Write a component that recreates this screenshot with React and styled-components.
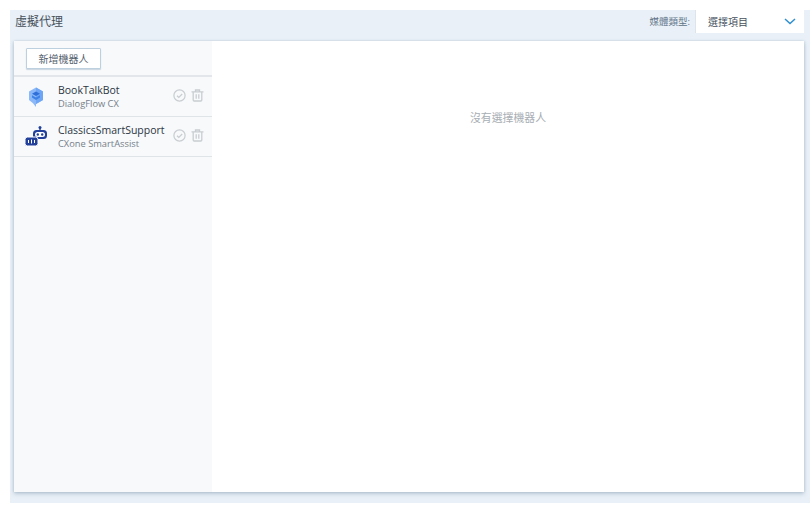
import React from 'react';
import styled, { createGlobalStyle } from 'styled-components';

const Global = createGlobalStyle`
  html, body {
    margin: 0;
    padding: 0;
    background: #fff;
    font-family: "Open Sans", "Noto Sans CJK TC", sans-serif;
  }
`;

const Page = styled.div`
  width: 812px;
  height: 514px;
  box-sizing: border-box;
  padding: 10px 2px 11px 10px;
  overflow: hidden;
`;

const Panel = styled.div`
  height: 100%;
  display: flex;
  flex-direction: column;
  background: #e9f0f7;
`;

const Header = styled.div`
  height: 31px;
  flex: none;
  display: flex;
  align-items: flex-start;
  justify-content: space-between;
  padding: 0 6px 0 5px;
`;

const Title = styled.div`
  font-size: 12px;
  line-height: 24px;
  color: #46505c;
`;

const Filter = styled.div`
  display: flex;
  align-items: flex-start;
`;

const FilterLabel = styled.div`
  font-size: 9.5px;
  line-height: 24px;
  color: #5f7488;
  margin-right: 5px;
`;

const Select = styled.div`
  width: 109px;
  height: 23px;
  box-sizing: border-box;
  background: #fff;
  border-left: 1px solid #dde5ec;
  display: flex;
  align-items: center;
  justify-content: space-between;
  padding: 0 8px 0 12px;
  font-size: 10px;
  color: #46505c;
`;

const Card = styled.div`
  flex: 1;
  margin: 0 6px 11px 4px;
  display: flex;
  min-height: 0;
  background: #fff;
  box-shadow: 0 2px 4px rgba(90, 120, 150, 0.32), 1px 0 2px rgba(90, 120, 150, 0.12), -1px 0 2px rgba(90, 120, 150, 0.12);
`;

const Sidebar = styled.div`
  width: 198px;
  flex: none;
  background: #f7f9fb;
`;

const Toolbar = styled.div`
  height: 36px;
  box-sizing: border-box;
  padding: 7px 0 0 12px;
  border-bottom: 2px solid #e3e7eb;
`;

const AddButton = styled.button`
  display: block;
  width: 75px;
  height: 21px;
  padding: 0;
  background: #fff;
  border: 1px solid #bcd0e0;
  border-radius: 1px;
  box-shadow: 0 1px 1px rgba(120, 150, 180, 0.35);
  font-family: inherit;
  font-size: 10px;
  color: #55626e;
`;

const BotRow = styled.div`
  height: 40px;
  box-sizing: border-box;
  display: flex;
  align-items: center;
  padding: 0 8px 0 10px;
  border-bottom: 1px solid #dfe4e9;
`;

const BotIcon = styled.div`
  width: 24px;
  height: 24px;
  flex: none;
  display: flex;
  align-items: center;
  justify-content: center;
  margin-right: 10px;
`;

const BotInfo = styled.div`
  flex: 1;
  min-width: 0;
`;

const BotName = styled.div`
  font-size: 10.5px;
  font-weight: 500;
  line-height: 14px;
  color: #2c3642;
  white-space: nowrap;
`;

const BotType = styled.div`
  font-size: 9.3px;
  line-height: 13px;
  color: #76808a;
  white-space: nowrap;
`;

const Actions = styled.div`
  display: flex;
  align-items: center;
  gap: 5px;
  flex: none;
  margin-bottom: 2px;
`;

const Content = styled.div`
  flex: 1;
  display: flex;
  justify-content: center;
  padding-top: 69px;
  font-size: 10.9px;
  line-height: 16px;
  color: #a8aeb4;
`;

const Chevron = () => (
  <svg width="12" height="7" viewBox="0 0 12 7" fill="none">
    <path d="M1 1l5 4.500L11 1" stroke="#2f8fd0" strokeWidth="1.5" />
  </svg>
);

const CheckIcon = () => (
  <svg width="13" height="13" viewBox="0 0 13 13" fill="none" stroke="#c9cdd1" strokeWidth="1.2">
    <circle cx="6.500" cy="6.500" r="5.600" />
    <path d="M4 6.700l1.800 1.700L9.200 5" />
  </svg>
);

const TrashIcon = () => (
  <svg width="13" height="13" viewBox="0 0 13 13" fill="none" stroke="#c9cdd1" strokeWidth="1.3">
    <path d="M0.500 2.800h12M4.500 2.600V1h4v1.600M2.200 3v8a1 1 0 0 0 1 1h6.600a1 1 0 0 0 1-1V3M5.200 5.200v4.600M7.800 5.200v4.600" />
  </svg>
);

const DialogFlowIcon = () => (
  <svg width="16" height="20" viewBox="0 0 16 20">
    <path d="M8 .5l7 4v8.600l-7 4V20l-3-3.800-4-3.100V4.500z" fill="#8ab8f8" />
    <path d="M8 .5l7 4v8.600l-7 4z" fill="#6ea6f5" />
    <path d="M8 4.500l4 2.300-4 2.300-4-2.300z" fill="#2f6fd8" />
    <path d="M4 8.300l4 2.300 4-2.300v2.300l-4 2.300-4-2.300z" fill="#3d80e6" />
  </svg>
);

const RobotIcon = () => (
  <svg width="23" height="21" viewBox="0 0 23 21">
    <circle cx="15" cy="1.500" r="1.500" fill="#22409a" />
    <rect x="14.300" y="2" width="1.400" height="2.500" fill="#22409a" />
    <rect x="8" y="4" width="14" height="9" rx="3.500" fill="#22409a" />
    <rect x="10" y="6" width="10" height="5" rx="2.500" fill="#fff" />
    <circle cx="12.800" cy="8.500" r="1.200" fill="#22409a" />
    <circle cx="17.200" cy="8.500" r="1.200" fill="#22409a" />
    <rect x="0" y="11" width="13" height="9" rx="2.500" fill="#22409a" stroke="#fff" strokeWidth="1" />
    <path d="M3.500 14v3M6.500 13.500v4M9.500 14v3" stroke="#fff" strokeWidth="1" />
  </svg>
);

const bots = [
  { name: 'BookTalkBot', type: 'DialogFlow CX', Icon: DialogFlowIcon },
  { name: 'ClassicsSmartSupport', type: 'CXone SmartAssist', Icon: RobotIcon },
];

const App = () => (
  <>
    <Global />
    <Page>
      <Panel>
        <Header>
          <Title>虛擬代理</Title>
          <Filter>
            <FilterLabel>媒體類型:</FilterLabel>
            <Select>
              選擇項目
              <Chevron />
            </Select>
          </Filter>
        </Header>
        <Card>
          <Sidebar>
            <Toolbar>
              <AddButton>新增機器人</AddButton>
            </Toolbar>
            {bots.map(({ name, type, Icon }) => (
              <BotRow key={name}>
                <BotIcon>
                  <Icon />
                </BotIcon>
                <BotInfo>
                  <BotName>{name}</BotName>
                  <BotType>{type}</BotType>
                </BotInfo>
                <Actions>
                  <CheckIcon />
                  <TrashIcon />
                </Actions>
              </BotRow>
            ))}
          </Sidebar>
          <Content>沒有選擇機器人</Content>
        </Card>
      </Panel>
    </Page>
  </>
);

export default App;
